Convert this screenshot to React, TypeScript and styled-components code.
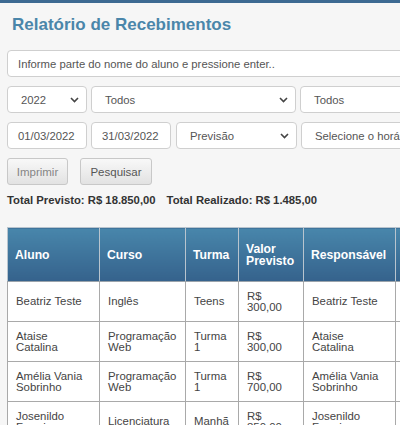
import React from 'react';
import styled, { createGlobalStyle } from 'styled-components';

const GlobalStyle = createGlobalStyle`
  html, body {
    margin: 0;
    padding: 0;
    background: #f6f6f6;
    overflow: hidden;
  }
  body {
    font-family: 'Liberation Sans', Arial, sans-serif;
  }
`;

const TopBar = styled('div')`
  height: 3px;
  background: #3d6a92;
`;

const Page = styled('div')`
  width: 560px;
  padding: 0 7px;
`;

const Title = styled('h1')`
  margin: 10px 0 0 5px;
  font-size: 17px;
  line-height: 24px;
  font-weight: 700;
  color: #4a86aa;
`;

const Row = styled('div')<{ $top?: number }>`
  display: flex;
  gap: 4px;
  margin-top: ${(props) => props.$top ?? 9}px;
`;

const Field = styled('div')<{ $width?: number; $select?: boolean }>`
  box-sizing: border-box;
  display: flex;
  align-items: center;
  justify-content: space-between;
  height: 27px;
  width: ${(props) => (props.$width ? `${props.$width}px` : 'auto')};
  flex: ${(props) => (props.$width ? 'none' : '1')};
  padding: 0 ${(props) => (props.$select ? '7px 0 13px' : '10px')};
  background: #fff;
  border: 1px solid #cfcfcf;
  border-radius: 4px;
  font-size: 11.3px;
  color: #555;
  white-space: nowrap;
  overflow: hidden;
`;

const Chevron = () => (
  <svg width="9" height="6" viewBox="0 0 9 6">
    <path d="M1 1l3.5 3.5L8 1" fill="none" stroke="#444" strokeWidth="1.6" />
  </svg>
);

const Buttons = styled('div')`
  display: flex;
  gap: 12px;
  margin-top: 9px;
`;

const Button = styled('button')<{ $muted?: boolean; $width: number }>`
  box-sizing: border-box;
  height: 27px;
  width: ${(props) => props.$width}px;
  padding: 0;
  font-family: 'Liberation Sans', Arial, sans-serif;
  font-size: 11.5px;
  color: ${(props) => (props.$muted ? '#858585' : '#555')};
  background: linear-gradient(#f8f8f8, #e2e2e2);
  border: 1px solid #c8c8c8;
  border-radius: 3px;
`;

const Totals = styled('div')`
  display: flex;
  gap: 11px;
  margin-top: 9px;
  font-size: 11.3px;
  font-weight: 700;
  color: #333;
`;

const Table = styled('table')`
  margin-top: 21px;
  border-collapse: collapse;
  table-layout: fixed;
  width: 488px;
  background: #fff;
  font-size: 11.4px;
  color: #444;
`;

const Th = styled('th')`
  height: 54px;
  box-sizing: border-box;
  padding: 0 7px;
  text-align: left;
  vertical-align: middle;
  font-size: 12.2px;
  font-weight: 700;
  line-height: 12px;
  color: #fff;
  background: linear-gradient(#4886ab, #35628c);
  border: 1px solid #b8c4ce;
  border-bottom-color: #9aa3ab;
`;

const Td = styled('td')`
  height: 40px;
  box-sizing: border-box;
  padding: 0 8px;
  vertical-align: middle;
  line-height: 11px;
  border: 1px solid #a9a9a9;
`;

const columns = [
  { label: 'Aluno', width: 92 },
  { label: 'Curso', width: 86 },
  { label: 'Turma', width: 53 },
  { label: 'Valor Previsto', width: 65 },
  { label: 'Responsável', width: 92 },
  { label: 'Vencimento', width: 100 },
];

const rows = [
  ['Beatriz Teste', 'Inglês', 'Teens', 'R$ 300,00', 'Beatriz Teste', '10/03/2022'],
  ['Ataise Catalina', 'Programação Web', 'Turma 1', 'R$ 300,00', 'Ataise Catalina', '10/03/2022'],
  ['Amélia Vania Sobrinho', 'Programação Web', 'Turma 1', 'R$ 700,00', 'Amélia Vania Sobrinho', '10/03/2022'],
  ['Josenildo Ferreira', 'Licenciatura', 'Manhã', 'R$ 850,00', 'Josenildo Ferreira', '10/03/2022'],
];

export default function App() {
  return (
    <>
      <GlobalStyle />
      <TopBar />
      <Page>
        <Title>Relatório de Recebimentos</Title>
        <Row $top={13}>
          <Field>Informe parte do nome do aluno e pressione enter..</Field>
        </Row>
        <Row>
          <Field $width={80} $select>
            2022 <Chevron />
          </Field>
          <Field $width={205} $select>
            Todos <Chevron />
          </Field>
          <Field $width={205} $select>
            Todos <Chevron />
          </Field>
        </Row>
        <Row>
          <Field $width={80}>01/03/2022</Field>
          <Field $width={80}>31/03/2022</Field>
          <Field $width={121} $select style={{ marginLeft: 1 }}>
            Previsão <Chevron />
          </Field>
          <Field $width={205} $select>
            Selecione o horário <Chevron />
          </Field>
        </Row>
        <Buttons>
          <Button $muted $width={61}>
            Imprimir
          </Button>
          <Button $width={72}>Pesquisar</Button>
        </Buttons>
        <Totals>
          <span>Total Previsto: R$ 18.850,00</span>
          <span>Total Realizado: R$ 1.485,00</span>
        </Totals>
        <Table>
          <colgroup>
            {columns.map((c) => (
              <col key={c.label} style={{ width: c.width }} />
            ))}
          </colgroup>
          <thead>
            <tr>
              {columns.map((c) => (
                <Th key={c.label}>{c.label}</Th>
              ))}
            </tr>
          </thead>
          <tbody>
            {rows.map((r, i) => (
              <tr key={i}>
                {r.map((cell, j) => (
                  <Td key={j}>{cell}</Td>
                ))}
              </tr>
            ))}
          </tbody>
        </Table>
      </Page>
    </>
  );
}
